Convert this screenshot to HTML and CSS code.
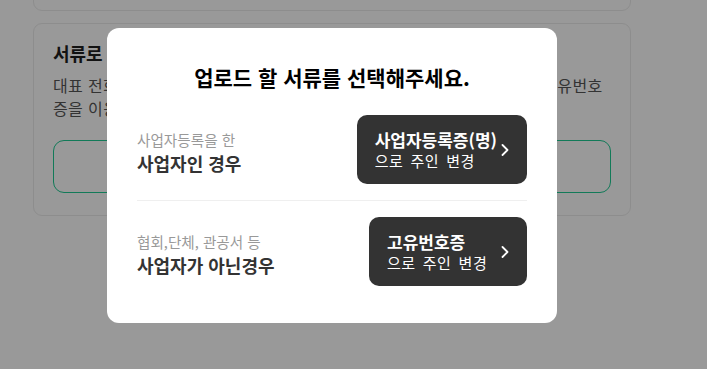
FILE: index.html
```html
<!DOCTYPE html>
<html lang="ko">
<head>
<meta charset="utf-8">
<title>주인 변경</title>
<link rel="stylesheet" href="styles.css">
</head>
<body>
<main class="page">
  <section class="card card-prev" aria-hidden="true"></section>
  <section class="card">
    <h3 class="card-title">서류로 주인 변경하기</h3>
    <p class="card-desc">대표 전화번호로 본인 인증이 어려우신 경우에는 사업자등록증(명) 또는 고유번호증을 이용하여 주인 변경을 진행할 수 있습니다.</p>
    <button class="outline-btn" type="button">서류 업로드하기</button>
  </section>
</main>

<div class="overlay">
  <div class="modal" role="dialog" aria-modal="true">
    <h2 class="modal-title">업로드 할 서류를 선택해주세요.</h2>
    <div class="option">
      <div class="option-desc">
        <p class="option-sub">사업자등록을 한</p>
        <p class="option-main">사업자인 경우</p>
      </div>
      <button class="choice-btn" type="button">
        <span class="choice-text">
          <span class="choice-strong">사업자등록증(명)</span>
          <span class="choice-normal">으로 주인 변경</span>
        </span>
        <svg class="chevron" viewBox="0 0 8 12" width="8" height="12" aria-hidden="true"><path d="M1.5 1 L6.5 6 L1.5 11" fill="none" stroke="#fff" stroke-width="1.8" stroke-linecap="round" stroke-linejoin="round"/></svg>
      </button>
    </div>
    <div class="option option-divided">
      <div class="option-desc">
        <p class="option-sub">협회,단체, 관공서 등</p>
        <p class="option-main">사업자가 아닌경우</p>
      </div>
      <button class="choice-btn" type="button">
        <span class="choice-text">
          <span class="choice-strong">고유번호증</span>
          <span class="choice-normal">으로 주인 변경</span>
        </span>
        <svg class="chevron" viewBox="0 0 8 12" width="8" height="12" aria-hidden="true"><path d="M1.5 1 L6.5 6 L1.5 11" fill="none" stroke="#fff" stroke-width="1.8" stroke-linecap="round" stroke-linejoin="round"/></svg>
      </button>
    </div>
  </div>
</div>
</body>
</html>
```
FILE: styles.css
```css
* { box-sizing: border-box; }

html, body {
  margin: 0;
  padding: 0;
  background: #fff;
  font-family: "Noto Sans CJK KR", "Noto Sans", sans-serif;
  overflow: hidden;
  height: 100%;
}

.page {
  width: 664px;
  padding: 0 33px;
  display: flex;
  flex-direction: column;
  gap: 12px;
}

.card {
  background: #fff;
  border: 1px solid #ececec;
  border-radius: 9px;
  padding: 19px 19px 22px;
}

.card-prev {
  height: 120px;
  margin-top: -109px;
}

.card-title {
  margin: 0;
  font-size: 18px;
  line-height: 20px;
  font-weight: 700;
  color: #1e1e1e;
}

.card-desc {
  margin: 11px 0 0;
  font-size: 16px;
  line-height: 23px;
  letter-spacing: 0.4px;
  color: #555;
}

.outline-btn {
  display: block;
  width: 100%;
  height: 53px;
  margin-top: 20px;
  border: 1px solid #1ecb93;
  border-radius: 11px;
  background: #fff;
  font: inherit;
  font-size: 15px;
  color: #1ecb93;
}

.overlay {
  position: fixed;
  inset: 0;
  background: rgba(0, 0, 0, 0.4);
  display: flex;
  align-items: center;
  justify-content: center;
  padding: 0 43px 18px 0;
}

.modal {
  width: 450px;
  background: #fff;
  border-radius: 12px;
  padding: 36px 30px 37px;
}

.modal-title {
  margin: 0 0 25px;
  text-align: center;
  font-size: 21px;
  line-height: 26px;
  font-weight: 700;
  color: #000;
}

.option {
  display: flex;
  align-items: center;
  justify-content: space-between;
  padding-bottom: 16px;
}

.option-divided {
  border-top: 1px solid #efefef;
  padding-top: 16px;
  padding-bottom: 0;
}

.option-desc {
  padding-top: 5px;
}

.option-desc p { margin: 0; }

.option-sub {
  font-size: 14.6px;
  line-height: 20px;
  color: #999;
}

.option-main {
  margin-top: 1px !important;
  font-size: 18px;
  line-height: 24px;
  font-weight: 600;
  color: #333;
}

.choice-btn {
  display: flex;
  align-items: center;
  justify-content: space-between;
  gap: 4px;
  min-width: 158px;
  height: 69px;
  padding: 0 18px;
  border: 0;
  border-radius: 10px;
  background: #333;
  color: #fff;
  font: inherit;
  text-align: left;
  cursor: pointer;
}

.choice-text {
  display: flex;
  flex-direction: column;
}

.choice-strong {
  font-size: 17px;
  line-height: 21px;
  font-weight: 700;
}

.choice-normal {
  font-size: 15px;
  line-height: 21px;
  letter-spacing: 0.5px;
  word-spacing: 2.5px;
}

.chevron {
  flex: none;
  display: block;
}
```
